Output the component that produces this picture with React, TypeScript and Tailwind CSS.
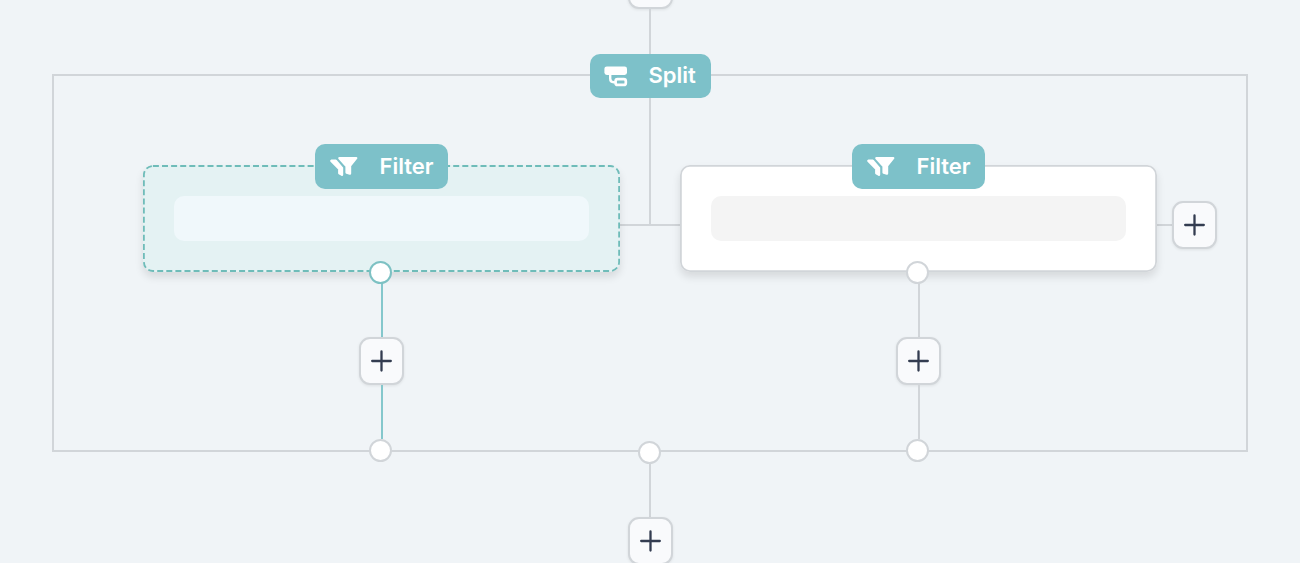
import type { ReactNode } from "react";
import clsx from "clsx";

// Pair of overlapping funnels
function FilterIcon() {
  return (
    <svg width="28" height="21" viewBox="0 0 28 21" fill="#fff" stroke="#fff" strokeLinejoin="round">
      <path d="M9.4 2.1H26.2L20 9.8V17.6L16.6 16.6V10.2Z" strokeWidth="2.4" />
      <path d="M1.4 4.8H5.8L12 12V18.8L9.3 17.2V12.8Z" strokeWidth="2.4" />
    </svg>
  );
}

function SplitIcon() {
  return (
    <svg width="24" height="21" viewBox="0 0 24 21" fill="none" stroke="#fff">
      <rect x="0.4" y="0.4" width="22.6" height="8.6" rx="2.4" fill="#fff" stroke="none" />
      <path d="M6.2 8V12.5Q6.2 16.2 9.7 16.2H11.5" strokeWidth="2.4" />
      <rect x="11.6" y="13.1" width="10.2" height="5.8" rx="2" strokeWidth="2.7" />
    </svg>
  );
}

// Label that sits on the top edge of a step
function StepBadge({ icon, label, className }: { icon: ReactNode; label: string; className: string }) {
  return (
    <div
      className={clsx(
        "absolute inset-x-0 z-10 mx-auto flex items-center rounded-[10px] bg-[#7dc1c9] text-[22px] font-semibold leading-none text-white",
        className
      )}
    >
      {icon}
      <span className="pb-0.5">{label}</span>
    </div>
  );
}

function AddButton() {
  return (
    <button
      aria-label="Add step"
      className="flex h-12 w-[45px] shrink-0 items-center justify-center rounded-[11px] border-2 border-[#d1d5d9] bg-[#f9fafc] shadow-[0_1px_3px_rgba(0,0,0,0.08)]"
    >
      <svg width="21" height="22" viewBox="0 0 21 22" stroke="#333c50" strokeWidth="2.3" strokeLinecap="round">
        <path d="M10.5 1.4V20.6M1.2 11H19.8" />
      </svg>
    </button>
  );
}

function Handle({ active }: { active?: boolean }) {
  return (
    <div className={clsx("size-[23px] rounded-full border-2 bg-white", active ? "border-[#7dc1c3]" : "border-[#d1d5d9]")} />
  );
}

function Branch({ active }: { active?: boolean }) {
  const line = active ? "bg-[#84c7cc]" : "bg-[#d1d5d9]";

  return (
    <div className="flex w-[477px] flex-col items-center">
      <div
        className={clsx(
          "relative h-[107px] w-full rounded-[10px] px-[31px] pt-[31px] shadow-[0_5px_8px_rgba(0,0,0,0.11)]",
          active ? "bg-[#e4f2f3]" : "bg-white"
        )}
      >
        <div className={clsx("h-[45px] rounded-[10px]", active ? "bg-[#f0f8fb]" : "bg-[#f4f4f4]")} />

        {/* Card outline */}
        <svg className="absolute inset-0" width="477" height="107" fill="none">
          {active ? (
            <rect x="0.9" y="1" width="475.2" height="105" rx="9" stroke="#6fbcb9" strokeWidth="1.8" strokeDasharray="6 3.1" />
          ) : (
            <rect x="0.9" y="0.9" width="475.2" height="105.2" rx="9" stroke="#d1d5d9" strokeWidth="1.8" />
          )}
        </svg>

        <StepBadge icon={<FilterIcon />} label="Filter" className="-top-[21px] h-[45px] w-[133px] gap-[21.5px] pl-[15px]" />
        <div className="absolute -bottom-3 left-[226px] z-10">
          <Handle active={active} />
        </div>
      </div>
      <div className={clsx("h-[65px] w-0.5", line)} />
      <AddButton />
      <div className={clsx("h-[54px] w-0.5", line)} />
      <div className="mr-[2px]">
        <Handle />
      </div>
    </div>
  );
}

function App() {
  return (
    <div className="flex h-[563px] w-[1300px] flex-col items-center overflow-hidden bg-[#f0f4f7] font-['Inter',sans-serif]">
      <div className="-mt-[39px] flex flex-col items-center">
        <AddButton />
        <div className="h-[65px] w-0.5 bg-[#d1d5d9]" />
      </div>

      {/* Split step with its branches */}
      <div className="relative flex h-[378px] w-[1196px] shrink-0 items-start border-2 border-[#d1d5d9] pl-[89px] pt-[89px]">
        <StepBadge icon={<SplitIcon />} label="Split" className="-top-[22px] h-11 w-[121px] gap-[21px] pl-3.5" />
        <div className="absolute left-[595px] top-0 h-[148px] w-0.5 bg-[#d1d5d9]" />

        <Branch active />
        <div className="mt-[59px] h-0.5 w-[60px] bg-[#d1d5d9]" />
        <Branch />
        <div className="mt-[59px] h-0.5 w-[15px] bg-[#d1d5d9]" />
        <div className="mt-9">
          <AddButton />
        </div>

        <div className="absolute -bottom-3.5 left-[584px] z-10">
          <Handle />
        </div>
      </div>

      <div className="h-[65px] w-0.5 shrink-0 bg-[#d1d5d9]" />
      <AddButton />
    </div>
  );
}

export default App;
